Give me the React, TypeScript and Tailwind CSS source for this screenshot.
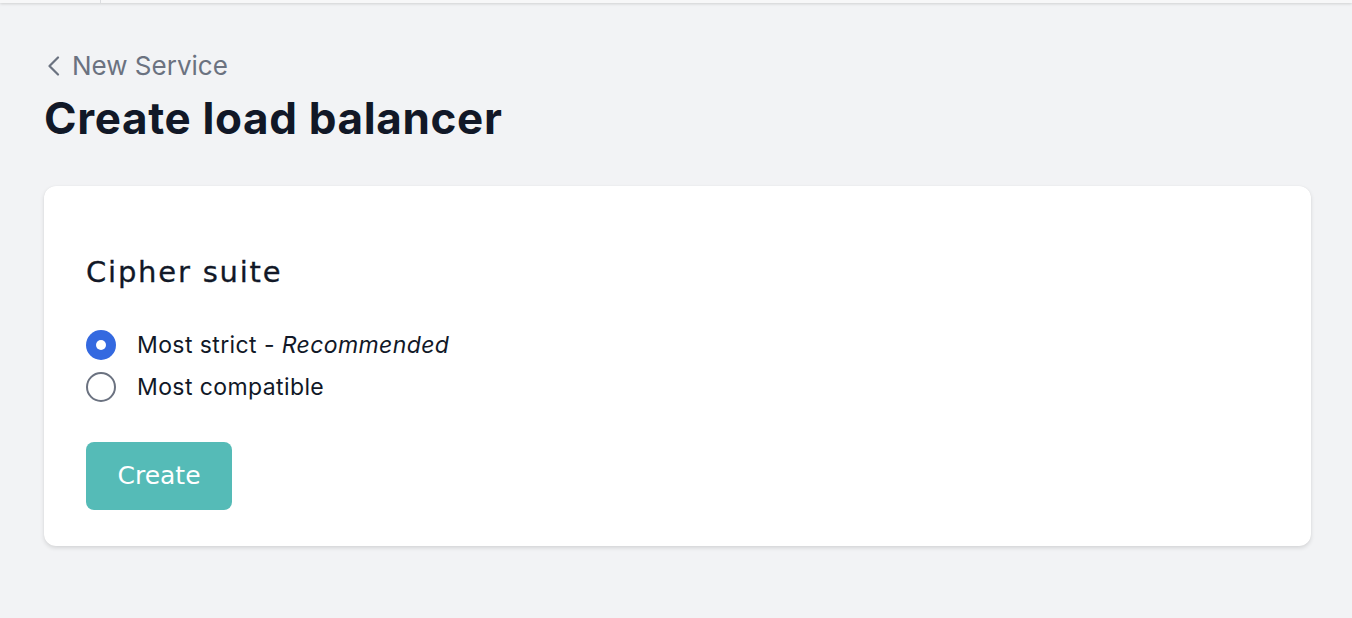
const wide = { fontFamily: "'DejaVu Sans', Inter, sans-serif" };

export default function App() {
	return (
		<div className="min-h-[618px] bg-[#f2f3f5] font-['Inter',sans-serif]">
			{/* cut-off top bar */}
			<div className="flex h-[3px] bg-[#f7f7f8] shadow-[0_1px_3px_rgba(0,0,0,0.15)]">
				<div className="w-[101px] border-r border-[#dcdde0]" />
			</div>

			<div className="pl-[44px] pr-[41px] pt-[47px]">
				<a className="flex items-center gap-[11px] text-[26px] leading-[32px] text-[#6b7280]">
					<svg width="14" height="20" viewBox="0 0 14 20" className="ml-[3px]" fill="none">
						<polyline
							points="11,1.5 2.5,10 11,18.5"
							stroke="currentColor"
							strokeWidth="2.2"
							strokeLinecap="round"
							strokeLinejoin="round"
						/>
					</svg>
					New Service
				</a>
				<h1 className="mt-[8px] text-[44px] font-bold leading-[56px] tracking-[0.65px] text-[#111827]">
					Create load balancer
				</h1>

				{/* Card */}
				<div className="mt-[40px] rounded-[12px] bg-white px-[42px] pt-[68px] pb-[36px] shadow-[0_2px_4px_rgba(0,0,0,0.12),0_0_1px_rgba(0,0,0,0.08)]">
					<h2
						className="text-[29px] leading-[36px] tracking-[1.8px] text-[#111827] [-webkit-text-stroke:0.3px_#111827]"
						style={wide}
					>
						Cipher suite
					</h2>

					<div className="mt-[40px] flex flex-col gap-[12px]">
						<label className="flex items-center gap-[21px] text-[23px] leading-[30px] tracking-[0.4px] text-[#111827]">
							<span className="flex h-[30px] w-[30px] items-center justify-center rounded-full bg-[#3469e0]">
								<span className="h-[10px] w-[10px] rounded-full bg-white" />
							</span>
							<span>
								Most strict - <i>Recommended</i>
							</span>
						</label>
						<label className="flex items-center gap-[21px] text-[23px] leading-[30px] tracking-[0.4px] text-[#111827]">
							<span className="h-[30px] w-[30px] rounded-full border-2 border-[#6b7280]" />
							<span>Most compatible</span>
						</label>
					</div>

					<button
						className="mt-[40px] h-[68px] w-[146px] rounded-[8px] bg-[#55bbb7] text-[25px] text-white"
						style={wide}
					>
						Create
					</button>
				</div>
			</div>
		</div>
	);
}
